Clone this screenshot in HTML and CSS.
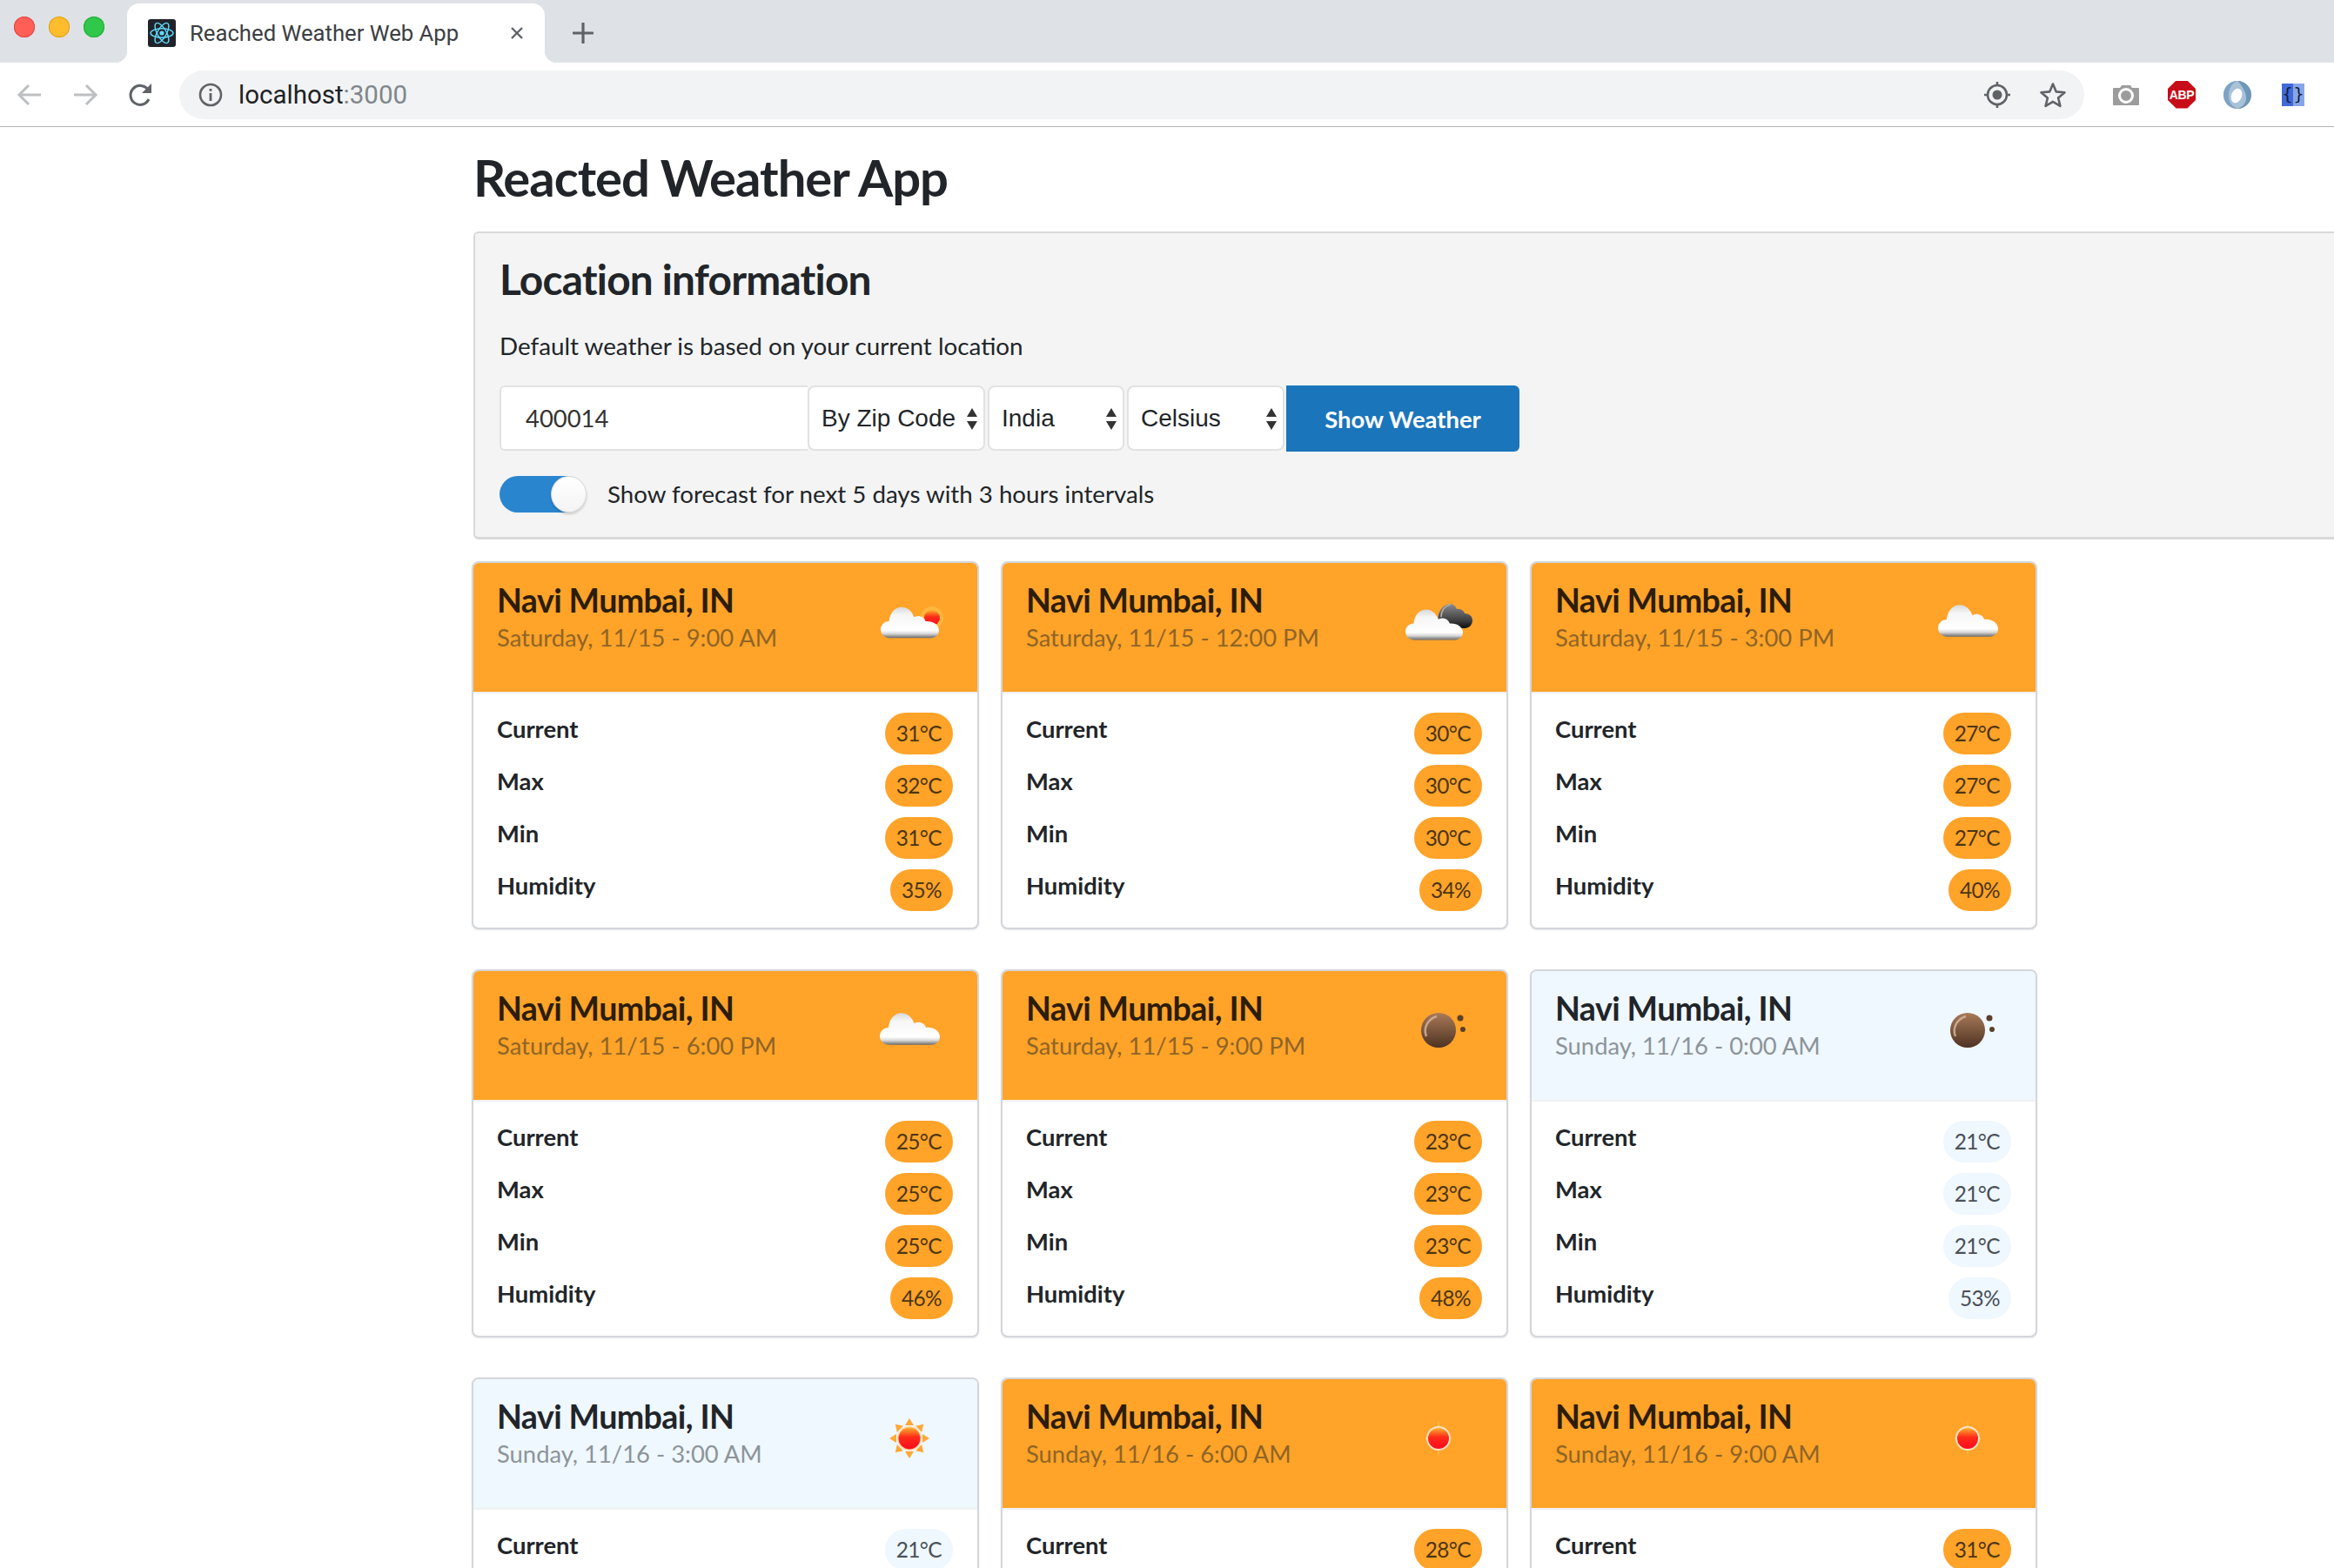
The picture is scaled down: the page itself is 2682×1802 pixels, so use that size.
FILE: index.html
```html
<!DOCTYPE html>
<html lang="en">

<head>
  <meta charset="UTF-8">
  <title>Reached Weather Web App</title>
  <link rel="stylesheet" href="styles.css">
</head>

<body>
  <svg class="defs" width="0" height="0">
    <defs>
      <linearGradient id="cloudFill" x1="0" y1="0" x2="0" y2="1">
        <stop offset="0" stop-color="#d8d8d8" />
        <stop offset="0.25" stop-color="#f6f6f6" />
        <stop offset="0.75" stop-color="#ffffff" />
        <stop offset="0.86" stop-color="#d8d8d8" />
        <stop offset="1" stop-color="#6a6a6a" />
      </linearGradient>
      <linearGradient id="darkFill" x1="0" y1="0" x2="0" y2="1">
        <stop offset="0" stop-color="#8a8a8a" />
        <stop offset="0.7" stop-color="#3c3c3c" />
        <stop offset="1" stop-color="#0c0c0c" />
      </linearGradient>
      <linearGradient id="sunFill" x1="0" y1="0" x2="0" y2="1">
        <stop offset="0" stop-color="#ffb030" />
        <stop offset="0.45" stop-color="#ff2a18" />
        <stop offset="1" stop-color="#ff0a20" />
      </linearGradient>
      <linearGradient id="moonFill" x1="0" y1="0" x2="0" y2="1">
        <stop offset="0" stop-color="#a87a58" />
        <stop offset="1" stop-color="#4e3222" />
      </linearGradient>
      <symbol id="cloud" viewBox="0 0 70 38">
        <path fill="url(#cloudFill)" d="M11 38C4 38 0 33 0 28 0 22 5 18 10 18 11 8 17 1 25 1 33 1 38 7 40 13 45 10 52 12 54 18 61 17 70 21 70 29 70 34 66 38 60 38Z" />
      </symbol>
      <symbol id="ico-sun-cloud" viewBox="0 0 80 80">
        <circle cx="66" cy="35" r="13" fill="#ffc850" opacity=".55" />
        <circle cx="66" cy="35" r="9" fill="url(#sunFill)" />
        <use href="#cloud" x="7" y="21" width="67" height="38" />
      </symbol>
      <symbol id="ico-dark-cloud" viewBox="0 0 80 80">
        <path fill="url(#darkFill)" d="M48 46C43 46 40 42 40 38 38 30 44 20 53 19 57 19 60 22 61 25 66 24 70 28 70 30 75 30 79 33 79 38 79 43 75 47 70 47Z" />
        <path fill="none" stroke="#b0b0b0" stroke-width="1.5" d="M43 34C43 27 47 21 54 20" />
        <use href="#cloud" x="2" y="23" width="66" height="39" />
      </symbol>
      <symbol id="ico-cloud" viewBox="0 0 80 80">
        <use href="#cloud" x="6" y="19" width="69" height="38" />
      </symbol>
      <symbol id="ico-moon" viewBox="0 0 80 80">
        <circle cx="40" cy="40" r="20" fill="url(#moonFill)" />
        <path fill="none" stroke="#d8b8a0" stroke-width="2.5" opacity=".8" d="M26 47C22 37 28 27 38 24" />
        <circle cx="65" cy="26" r="3.5" fill="#5a4028" />
        <circle cx="68" cy="39" r="3" fill="#5a4028" />
      </symbol>
      <symbol id="ico-sun" viewBox="0 0 80 80">
        <g fill="#ffa836">
          <path d="M40 17l5 8h-10z" />
          <path d="M40 17l5 8h-10z" transform="rotate(45 40 40)" />
          <path d="M40 17l5 8h-10z" transform="rotate(90 40 40)" />
          <path d="M40 17l5 8h-10z" transform="rotate(135 40 40)" />
          <path d="M40 17l5 8h-10z" transform="rotate(180 40 40)" />
          <path d="M40 17l5 8h-10z" transform="rotate(225 40 40)" />
          <path d="M40 17l5 8h-10z" transform="rotate(270 40 40)" />
          <path d="M40 17l5 8h-10z" transform="rotate(315 40 40)" />
        </g>
        <circle cx="40" cy="40" r="14" fill="#ffd9a0" />
        <circle cx="40" cy="40" r="12.5" fill="url(#sunFill)" />
      </symbol>
      <symbol id="ico-sun-dim" viewBox="0 0 80 80">
        <path fill="#ffb84a" d="M40 18l2 14 14 8-14 8-2 14-2-14-14-8 14-8z" />
        <circle cx="40" cy="40" r="14" fill="#ffe3c0" />
        <circle cx="40" cy="40" r="12" fill="url(#sunFill)" />
      </symbol>
    </defs>
  </svg>

  <div class="browser">
    <div class="tab-bar">
      <div class="lights">
        <span class="light red"></span>
        <span class="light yellow"></span>
        <span class="light green"></span>
      </div>
      <div class="tab">
        <svg class="favicon" viewBox="0 0 32 32">
          <rect width="32" height="32" rx="3" fill="#20232a" />
          <g fill="none" stroke="#61dafb" stroke-width="1.4">
            <ellipse cx="16" cy="16" rx="13" ry="5.2" />
            <ellipse cx="16" cy="16" rx="13" ry="5.2" transform="rotate(60 16 16)" />
            <ellipse cx="16" cy="16" rx="13" ry="5.2" transform="rotate(120 16 16)" />
          </g>
          <circle cx="16" cy="16" r="2.6" fill="#61dafb" />
        </svg>
        <span class="tab-title">Reached Weather Web App</span>
        <svg class="tab-close" viewBox="0 0 16 16"><path d="M2 2l12 12M14 2L2 14" stroke="#5f6368" stroke-width="2.4" /></svg>
      </div>
      <svg class="new-tab" viewBox="0 0 24 24"><path d="M12 1v22M1 12h22" stroke="#5f6368" stroke-width="3.2" stroke-linecap="round" /></svg>
    </div>
    <div class="toolbar">
      <svg class="tool" viewBox="0 0 32 32"><path d="M29 16H5M15 5L4 16l11 11" fill="none" stroke="#bdbfc2" stroke-width="3" /></svg>
      <svg class="tool" viewBox="0 0 32 32"><path d="M3 16h24M17 5l11 11-11 11" fill="none" stroke="#bdbfc2" stroke-width="3" /></svg>
      <svg class="tool reload" viewBox="0 0 32 32">
        <path d="M25 21a11 11 0 1 1-1-11" fill="none" stroke="#5f6368" stroke-width="3" />
        <path d="M28 3v11H17z" fill="#5f6368" />
      </svg>
      <div class="url-bar">
        <svg class="url-info" viewBox="0 0 28 28">
          <circle cx="14" cy="14" r="12" fill="none" stroke="#5f6368" stroke-width="2.6" />
          <path d="M12.6 12h2.8v9h-2.8zM12.6 7h2.8v2.8h-2.8z" fill="#5f6368" />
        </svg>
        <span class="url-host">localhost</span><span class="url-port">:3000</span>
        <svg class="url-icon target" viewBox="0 0 32 32">
          <circle cx="16" cy="16" r="11" fill="none" stroke="#5f6368" stroke-width="2.6" />
          <circle cx="16" cy="16" r="5.5" fill="#5f6368" />
          <path d="M16 1v5M16 26v5M1 16h5M26 16h5" stroke="#5f6368" stroke-width="2.6" />
        </svg>
        <svg class="url-icon star" viewBox="0 0 32 32">
          <path d="M16 3.5l3.8 8.9 9.7.8-7.4 6.3 2.3 9.4-8.4-5-8.4 5 2.3-9.4-7.4-6.3 9.7-.8z" fill="none" stroke="#5f6368" stroke-width="2.6" stroke-linejoin="round" />
        </svg>
      </div>
      <svg class="tool" viewBox="0 0 32 32">
        <path d="M2 8h7l2-3h10l2 3h7a1 1 0 0 1 1 1v18a1 1 0 0 1-1 1H2a1 1 0 0 1-1-1V9a1 1 0 0 1 1-1z" fill="#9c9c9c" />
        <circle cx="16" cy="17" r="7.5" fill="none" stroke="#fff" stroke-width="3" />
      </svg>
      <div class="abp">ABP</div>
      <svg class="tool" viewBox="0 0 32 32">
        <circle cx="16" cy="16" r="16" fill="#a8c2d8" />
        <path d="M16 0a16 16 0 0 1 0 32c8-3 10-8 10-13S22 6 16 0z" fill="#6f97b8" />
        <ellipse cx="15" cy="17" rx="6" ry="8.5" transform="rotate(20 15 17)" fill="#fff" />
        <path d="M0 16C0 7 7 0 16 0 9 3 6 9 6 17s4 12 10 15C7 32 0 25 0 16z" fill="#7fa3c2" />
      </svg>
      <div class="braces"><span>{</span><span>}</span></div>
    </div>
  </div>

  <main class="page">
    <h1 class="page-title">Reacted Weather App</h1>

    <section class="location">
      <h3 class="location-title">Location information</h3>
      <p class="location-text">Default weather is based on your current location</p>
      <form class="search-form">
        <input class="zip-input" type="text" value="400014">
        <div class="select-wrap zip-type"><select><option>By Zip Code</option></select></div>
        <div class="select-wrap country"><select><option>India</option></select></div>
        <div class="select-wrap unit"><select><option>Celsius</option></select></div>
        <button class="show-btn" type="button">Show Weather</button>
      </form>
      <div class="forecast-toggle">
        <span class="switch"><span class="switch-thumb"></span></span>
        <span>Show forecast for next 5 days with 3 hours intervals</span>
      </div>
    </section>

    <div class="cards">
      <article class="card warm">
        <header class="card-head">
          <div>
            <h5 class="card-city">Navi Mumbai, IN</h5>
            <div class="card-date">Saturday, 11/15 - 9:00 AM</div>
          </div>
          <svg class="card-icon"><use href="#ico-sun-cloud" /></svg>
        </header>
        <ul class="stats">
          <li><span>Current</span><b class="badge">31°C</b></li>
          <li><span>Max</span><b class="badge">32°C</b></li>
          <li><span>Min</span><b class="badge">31°C</b></li>
          <li><span>Humidity</span><b class="badge">35%</b></li>
        </ul>
      </article>

      <article class="card warm">
        <header class="card-head">
          <div>
            <h5 class="card-city">Navi Mumbai, IN</h5>
            <div class="card-date">Saturday, 11/15 - 12:00 PM</div>
          </div>
          <svg class="card-icon"><use href="#ico-dark-cloud" /></svg>
        </header>
        <ul class="stats">
          <li><span>Current</span><b class="badge">30°C</b></li>
          <li><span>Max</span><b class="badge">30°C</b></li>
          <li><span>Min</span><b class="badge">30°C</b></li>
          <li><span>Humidity</span><b class="badge">34%</b></li>
        </ul>
      </article>

      <article class="card warm">
        <header class="card-head">
          <div>
            <h5 class="card-city">Navi Mumbai, IN</h5>
            <div class="card-date">Saturday, 11/15 - 3:00 PM</div>
          </div>
          <svg class="card-icon"><use href="#ico-cloud" /></svg>
        </header>
        <ul class="stats">
          <li><span>Current</span><b class="badge">27°C</b></li>
          <li><span>Max</span><b class="badge">27°C</b></li>
          <li><span>Min</span><b class="badge">27°C</b></li>
          <li><span>Humidity</span><b class="badge">40%</b></li>
        </ul>
      </article>

      <article class="card warm">
        <header class="card-head">
          <div>
            <h5 class="card-city">Navi Mumbai, IN</h5>
            <div class="card-date">Saturday, 11/15 - 6:00 PM</div>
          </div>
          <svg class="card-icon"><use href="#ico-cloud" /></svg>
        </header>
        <ul class="stats">
          <li><span>Current</span><b class="badge">25°C</b></li>
          <li><span>Max</span><b class="badge">25°C</b></li>
          <li><span>Min</span><b class="badge">25°C</b></li>
          <li><span>Humidity</span><b class="badge">46%</b></li>
        </ul>
      </article>

      <article class="card warm">
        <header class="card-head">
          <div>
            <h5 class="card-city">Navi Mumbai, IN</h5>
            <div class="card-date">Saturday, 11/15 - 9:00 PM</div>
          </div>
          <svg class="card-icon"><use href="#ico-moon" /></svg>
        </header>
        <ul class="stats">
          <li><span>Current</span><b class="badge">23°C</b></li>
          <li><span>Max</span><b class="badge">23°C</b></li>
          <li><span>Min</span><b class="badge">23°C</b></li>
          <li><span>Humidity</span><b class="badge">48%</b></li>
        </ul>
      </article>

      <article class="card cool">
        <header class="card-head">
          <div>
            <h5 class="card-city">Navi Mumbai, IN</h5>
            <div class="card-date">Sunday, 11/16 - 0:00 AM</div>
          </div>
          <svg class="card-icon"><use href="#ico-moon" /></svg>
        </header>
        <ul class="stats">
          <li><span>Current</span><b class="badge">21°C</b></li>
          <li><span>Max</span><b class="badge">21°C</b></li>
          <li><span>Min</span><b class="badge">21°C</b></li>
          <li><span>Humidity</span><b class="badge">53%</b></li>
        </ul>
      </article>

      <article class="card cool">
        <header class="card-head">
          <div>
            <h5 class="card-city">Navi Mumbai, IN</h5>
            <div class="card-date">Sunday, 11/16 - 3:00 AM</div>
          </div>
          <svg class="card-icon"><use href="#ico-sun" /></svg>
        </header>
        <ul class="stats">
          <li><span>Current</span><b class="badge">21°C</b></li>
        </ul>
      </article>

      <article class="card warm">
        <header class="card-head">
          <div>
            <h5 class="card-city">Navi Mumbai, IN</h5>
            <div class="card-date">Sunday, 11/16 - 6:00 AM</div>
          </div>
          <svg class="card-icon"><use href="#ico-sun-dim" /></svg>
        </header>
        <ul class="stats">
          <li><span>Current</span><b class="badge">28°C</b></li>
        </ul>
      </article>

      <article class="card warm">
        <header class="card-head">
          <div>
            <h5 class="card-city">Navi Mumbai, IN</h5>
            <div class="card-date">Sunday, 11/16 - 9:00 AM</div>
          </div>
          <svg class="card-icon"><use href="#ico-sun-dim" /></svg>
        </header>
        <ul class="stats">
          <li><span>Current</span><b class="badge">31°C</b></li>
        </ul>
      </article>
    </div>
  </main>
</body>

</html>
```

FILE: styles.css
```css
html,
body {
  margin: 0;
  height: 1802px;
  overflow: hidden;
  background: #fff;
}

body {
  font-family: Lato, "Open Sans", sans-serif;
  font-size: 27.4px;
  color: #212529;
}

.defs {
  display: block;
  height: 0;
}

/* Browser chrome */

.browser {
  font-family: Roboto, "Liberation Sans", sans-serif;
}

.tab-bar {
  display: flex;
  align-items: flex-end;
  height: 72px;
  background: #dee1e6;
}

.lights {
  display: flex;
  gap: 16px;
  width: 130px;
  padding-left: 16px;
  align-self: flex-start;
  margin-top: 19px;
}

.light {
  width: 24px;
  height: 24px;
  border-radius: 50%;
}

.light.red {
  background: #ff5f57;
  box-shadow: inset 0 0 0 1px #e2463f;
}

.light.yellow {
  background: #ffbd2e;
  box-shadow: inset 0 0 0 1px #e1a116;
}

.light.green {
  background: #2fc84a;
  box-shadow: inset 0 0 0 1px #25ab3a;
}

.tab {
  position: relative;
  display: flex;
  align-items: center;
  box-sizing: border-box;
  width: 480px;
  height: 68px;
  padding: 0 24px;
  background: #fff;
  border-radius: 14px 14px 0 0;
}

.tab::before,
.tab::after {
  content: "";
  position: absolute;
  bottom: 0;
  width: 14px;
  height: 14px;
}

.tab::before {
  left: -14px;
  background: radial-gradient(circle at 0 0, #dee1e6 14px, #fff 14.5px);
}

.tab::after {
  right: -14px;
  background: radial-gradient(circle at 100% 0, #dee1e6 14px, #fff 14.5px);
}

.favicon {
  width: 32px;
  height: 32px;
  flex: none;
}

.tab-title {
  margin-left: 16px;
  font-size: 25.7px;
  color: #3c4043;
  white-space: nowrap;
}

.tab-close {
  width: 16px;
  height: 16px;
  margin-left: auto;
}

.new-tab {
  width: 24px;
  height: 24px;
  margin: 0 0 22px 32px;
}

.toolbar {
  display: flex;
  align-items: center;
  gap: 32px;
  height: 73px;
  padding: 0 34px 0 18px;
  background: #fff;
  border-bottom: 1px solid #b4b4b4;
}

.tool {
  width: 32px;
  height: 32px;
  flex: none;
}

.reload {
  margin-right: -4px;
}

.url-bar {
  display: flex;
  align-items: center;
  flex: 1;
  height: 56px;
  padding: 0 20px 0 22px;
  background: #f1f3f4;
  border-radius: 28px;
  font-size: 29.5px;
}

.url-info {
  width: 28px;
  height: 28px;
  margin-right: 18px;
}

.url-host {
  color: #202124;
}

.url-port {
  color: #80868b;
}

.url-icon {
  width: 32px;
  height: 32px;
}

.target {
  margin-left: auto;
}

.star {
  margin-left: 32px;
}

.abp {
  flex: none;
  width: 32px;
  height: 32px;
  background: #c70d17;
  clip-path: polygon(30% 0, 70% 0, 100% 30%, 100% 70%, 70% 100%, 30% 100%, 0 70%, 0 30%);
  color: #fff;
  font: bold 14px/32px "Liberation Sans", sans-serif;
  text-align: center;
  letter-spacing: -.3px;
}

.braces {
  display: flex;
  justify-content: space-around;
  flex: none;
  width: 26px;
  height: 26px;
  margin-left: 3px;
  background: linear-gradient(90deg, #4169d9 50%, #86a6e8 50%);
  color: #14203c;
  font: 20px/24px "DejaVu Sans Mono", monospace;
}

/* Page */

.page {
  width: 2400px;
  margin-left: 544px;
}

.page-title {
  margin: 0;
  padding-top: 24px;
  height: 96px;
  font-size: 58px;
  font-weight: 700;
  letter-spacing: -1px;
  line-height: 67px;
}

.location {
  box-sizing: border-box;
  height: 354px;
  padding: 24px 28px 0;
  background: #f4f4f4;
  border: 2px solid #d9d9d9;
  border-bottom-width: 3px;
  border-radius: 6px;
}

.location-title {
  margin: 0;
  font-size: 47.8px;
  font-weight: 700;
  letter-spacing: -.8px;
  line-height: 57px;
}

.location-text {
  margin: 28px 0 0;
  font-size: 27.8px;
  line-height: 41px;
}

.search-form {
  display: flex;
  margin-top: 25px;
  height: 75px;
}

.zip-input {
  box-sizing: border-box;
  width: 354px;
  height: 75px;
  padding: 0 28px;
  border: 2px solid #e2e2e2;
  border-right: 0;
  border-radius: 6px 0 0 6px;
  background: #fff;
  font: 27.4px "Lato", sans-serif;
  color: #333;
}

.select-wrap {
  position: relative;
  box-sizing: border-box;
  height: 75px;
  margin-right: 3px;
  background: #fff;
  border: 2px solid #e2e2e2;
  border-radius: 8px;
}

.select-wrap::before,
.select-wrap::after {
  content: "";
  position: absolute;
  right: 7px;
  border-left: 6px solid transparent;
  border-right: 6px solid transparent;
}

.select-wrap::before {
  top: 24px;
  border-bottom: 10px solid #333;
}

.select-wrap::after {
  top: 39px;
  border-top: 10px solid #333;
}

.select-wrap select {
  appearance: none;
  display: block;
  width: 100%;
  height: 100%;
  padding: 0 14px;
  border: 0;
  background: transparent;
  font: 28px "Liberation Sans", sans-serif;
  color: #212529;
}

.zip-type {
  width: 204px;
}

.country {
  width: 157px;
}

.unit {
  width: 181px;
  margin-right: 2px;
}

.show-btn {
  width: 268px;
  height: 76px;
  padding: 0;
  border: 0;
  border-radius: 0 6px 6px 0;
  background: #1b75bb;
  color: #fff;
  font: 700 27.4px Lato, sans-serif;
}

.forecast-toggle {
  display: flex;
  align-items: center;
  gap: 24px;
  margin-top: 29px;
  font-size: 27.7px;
  line-height: 42px;
}

.switch {
  position: relative;
  display: block;
  width: 100px;
  height: 42px;
}

.switch::before {
  content: "";
  position: absolute;
  left: 0;
  top: 0;
  width: 78px;
  height: 42px;
  background: #2a85cf;
  border-radius: 21px 0 0 21px;
}

.switch-thumb {
  position: absolute;
  right: 0;
  top: 0;
  box-sizing: border-box;
  width: 41px;
  height: 42px;
  background: linear-gradient(#fff, #f4f4f4);
  border: 1px solid #d8d8d8;
  border-radius: 50%;
  box-shadow: 0 2px 3px rgba(0, 0, 0, .18);
}

/* Weather cards */

.cards {
  display: grid;
  grid-template-columns: repeat(3, 583px);
  gap: 46px 25px;
  margin-top: 25px;
  margin-left: -2px;
}

.card {
  box-sizing: border-box;
  height: 423px;
  background: #fff;
  border: 2px solid #d3d6da;
  border-radius: 8px;
  box-shadow: 0 1px 2px rgba(0, 0, 0, .1);
  overflow: hidden;
}

.card-head {
  display: flex;
  justify-content: space-between;
  box-sizing: border-box;
  height: 150px;
  padding: 20px 38px 0 27px;
  border-bottom: 2px solid #f1f1f1;
}

.card-city {
  margin: 0;
  font-size: 37.6px;
  font-weight: 700;
  letter-spacing: -.6px;
  line-height: 45px;
}

.card-date {
  margin-top: 3px;
  line-height: 36px;
}

.card-icon {
  width: 80px;
  height: 80px;
  margin-top: 8px;
  flex: none;
}

.warm .card-head {
  background: #ffa329;
  color: #2c1d0a;
}

.warm .card-date {
  color: #8e6526;
}

.warm .badge {
  background: #ffa329;
  color: #4b3612;
}

.cool .card-head {
  background: #eff7ff;
}

.cool .card-date {
  color: #8c9499;
}

.cool .badge {
  background: #eff7ff;
  color: #495057;
}

.stats {
  display: flex;
  flex-direction: column;
  gap: 12px;
  margin: 0;
  padding: 22px 28px 0 27px;
  list-style: none;
}

.stats li {
  display: flex;
  justify-content: space-between;
  height: 48px;
  font-weight: 700;
  line-height: 38px;
}

.badge {
  padding: 0 13px;
  border-radius: 24px;
  font-size: 24.4px;
  font-weight: 400;
  letter-spacing: -.6px;
  line-height: 48px;
}
```
